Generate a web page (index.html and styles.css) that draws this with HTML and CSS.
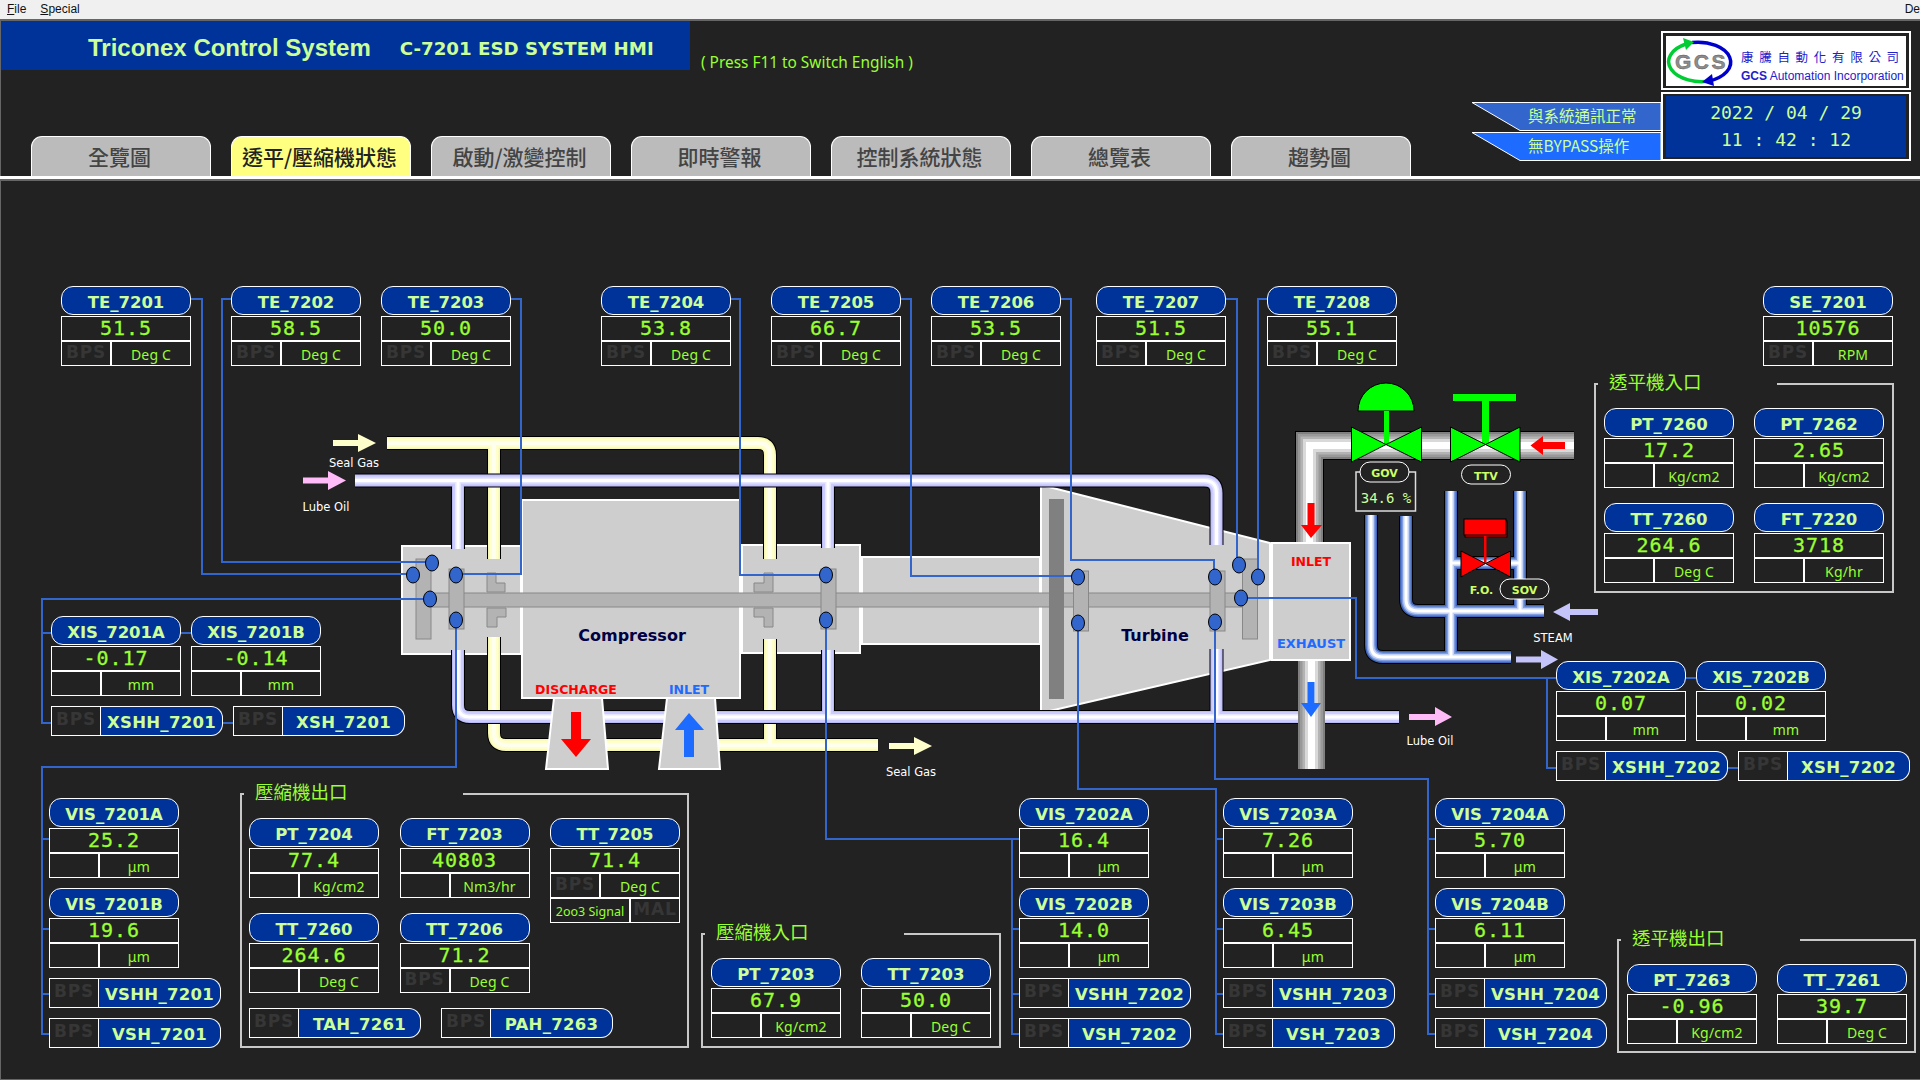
FILE: index.html
```html
<!DOCTYPE html>
<html lang="zh-Hant">

<head>
    <meta charset="UTF-8">
    <title>C-7201 ESD SYSTEM HMI</title>
    <link rel="stylesheet" href="styles.css">
</head>

<body>
    <div class="menubar">
        <span><u>F</u>ile</span>
        <span><u>S</u>pecial</span>
        <span class="menu-end">De</span>
    </div>

    <div class="screen">
        <header class="head">
            <div class="head-left">
                <div class="title-row">
                    <div class="title-band">
                        <span class="title-main">Triconex Control System</span>
                        <span class="title-sub">C-7201 ESD SYSTEM HMI</span>
                    </div>
                    <span class="press-hint">( Press F11 to Switch English )</span>
                </div>
                <nav class="tabs">
                    <a class="tab">全覽圖</a>
                    <a class="tab tab-active">透平/壓縮機狀態</a>
                    <a class="tab">啟動/激變控制</a>
                    <a class="tab">即時警報</a>
                    <a class="tab">控制系統狀態</a>
                    <a class="tab">總覽表</a>
                    <a class="tab">趨勢圖</a>
                </nav>
            </div>

            <div class="head-right">
                <div class="chips">
                    <svg class="chip" width="190" height="29" viewBox="0 0 190 29">
                        <polygon class="chip-a" points="1,.5 190,.5 190,28.5 49,28.5" />
                        <text x="57" y="20">與系統通訊正常</text>
                    </svg>
                    <svg class="chip" width="190" height="29" viewBox="0 0 190 29">
                        <polygon class="chip-b" points="1,.5 190,.5 190,28.5 49,28.5" />
                        <text x="57" y="20">無BYPASS操作</text>
                    </svg>
                </div>
                <div class="id-col">
                    <div class="logo-box">
                        <svg class="logo" width="240" height="50" viewBox="0 0 240 50">
                            <path class="logo-green" d="M20,8 A33,20 0 0 0 46,44.6" />
                            <path class="logo-blue" d="M26,6.5 A33,20 0 0 1 42,45.2" />
                            <polygon class="logo-green-head" points="17,2 28,6 20,14" />
                            <polygon class="logo-blue-head" points="46,38 48,50 36,46" />
                            <text class="logo-gcs" x="9" y="33">GCS</text>
                            <text class="logo-cn" x="75" y="26">康騰自動化有限公司</text>
                            <text class="logo-en" x="75" y="44"><tspan class="logo-en-b">GCS</tspan> Automation Incorporation</text>
                        </svg>
                    </div>
                    <div class="clock-box">
                        <div class="clock">
                            <span>2022 / 04 / 29</span>
                            <span>11 : 42 : 12</span>
                        </div>
                    </div>
                </div>
            </div>
        </header>
        <div class="head-rule"></div>

        <main class="plant">
            <svg class="plant-svg" width="1920" height="898" viewBox="0 181 1920 898">
                <defs>
                    <path id="oil" d="M355,480.5 H1204 Q1216.5,480.5 1216.5,493 V545 M458,480.5 V549 M828,480.5 V548 M458,650 V705 Q458,717 470,717 H1399 M828,650 V717 M1216.5,649 V717" />
                    <path id="cream" d="M387,443 H758 Q770,443 770,455 V559 M494,443 V559 M494,637 V733 Q494,745 506,745 H878 M770,639 V745" />
                    <path id="steam" d="M1371,515 V645 Q1371,657 1383,657 H1511 M1406,516 V599 Q1406,611 1418,611 H1544 M1451,491 V657 M1520,491 V611 M1451,563 H1520" />
                    <path id="hp" d="M1574,445.5 H1309.5 V545" />
                    <path id="ex" d="M1311.5,655 V769" />
                </defs>

                <!-- machine bodies -->
                <rect class="body" x="402" y="546" width="119" height="108" />
                <rect class="body" x="742" y="545" width="118" height="108" />
                <rect class="body" x="862" y="557" width="178" height="87" />
                <rect class="body" x="522" y="500" width="218" height="198" />
                <polygon class="body" points="1041,485 1270,543 1270,660 1041,713" />

                <!-- seal gas and lube oil headers -->
                <g class="pipe">
                    <use href="#cream" class="ck" />
                    <use href="#cream" class="c1" />
                    <use href="#cream" class="c2" />
                    <use href="#cream" class="c3" />
                    <use href="#oil" class="ck" />
                    <use href="#oil" class="o1" />
                    <use href="#oil" class="o2" />
                    <use href="#oil" class="o3" />
                    <use href="#oil" class="o4" />
                </g>

                <!-- rotor and bearings -->
                <rect class="part" x="431" y="593" width="813" height="14" />
                <rect class="part" x="416" y="559" width="15" height="80" />
                <rect class="part" x="449" y="569" width="15" height="60" />
                <rect class="part" x="821" y="569" width="15" height="60" />
                <rect class="part" x="1073.500" y="571" width="15" height="60" />
                <rect class="part" x="1210" y="571" width="15" height="60" />
                <rect class="part" x="1242.500" y="559" width="15" height="80" />
                <polygon class="part" points="487,573 496,573 496,583 505,583 505,592 487,592" />
                <polygon class="part" points="487,608 506,608 506,617 497,617 497,627 487,627" />
                <polygon class="part" points="764,573 773,573 773,592 754,592 754,583 764,583" />
                <polygon class="part" points="754,608 773,608 773,627 764,627 764,617 754,617" />
                <rect class="disk" x="1049" y="499" width="15" height="200" />

                <!-- compressor nozzles -->
                <polygon class="body" points="554,698 602,698 608,769 546,769" />
                <polygon class="body" points="667,698 715,698 720,769 659,769" />
                <polygon class="red" points="571,712 581,712 581,739 591,739 576,757 561,739 571,739" />
                <polygon class="blue" points="684,757 694,757 694,730 704,730 689,713 675,730 684,730" />

                <!-- steam pipes -->
                <g class="pipe-hp">
                    <use href="#hp" class="gk" />
                    <use href="#hp" class="g1" />
                    <use href="#hp" class="g2" />
                    <use href="#hp" class="g3" />
                    <use href="#hp" class="g4" />
                    <use href="#hp" class="g5" />
                    <use href="#ex" class="g1" />
                    <use href="#ex" class="g2" />
                    <use href="#ex" class="g3" />
                    <use href="#ex" class="g4" />
                    <use href="#ex" class="g5" />
                </g>
                <rect class="body" x="1272" y="543" width="78" height="117" />
                <g class="pipe">
                    <use href="#steam" class="ck" />
                    <use href="#steam" class="s1" />
                    <use href="#steam" class="s2" />
                    <use href="#steam" class="s3" />
                    <use href="#steam" class="s4" />
                </g>
                <polygon class="red" points="1307.500,503 1314.500,503 1314.500,525 1322,525 1311,538 1301,525 1307.500,525" />
                <polygon class="blue" points="1307.500,682 1314.500,682 1314.500,703 1321,703 1311,717 1301,703 1307.500,703" />
                <polygon class="red" points="1565,442 1543,442 1543,436 1530.500,445.500 1543,455 1543,449 1565,449" />

                <!-- valves -->
                <path class="valve" d="M1358,411 A28,28 0 0 1 1414,411 Z" />
                <rect class="valve-stem" x="1384" y="411" width="5" height="34" />
                <polygon class="valve" points="1351.500,427 1386,444.500 1351.500,462" />
                <polygon class="valve" points="1421.500,427 1386,444.500 1421.500,462" />
                <rect class="valve-stem" x="1453" y="394" width="63" height="7" />
                <rect class="valve-stem" x="1482" y="400" width="7" height="45" />
                <polygon class="valve" points="1450.500,427 1485.500,444.500 1450.500,462" />
                <polygon class="valve" points="1520,427 1485.500,444.500 1520,462" />
                <rect class="valve-red" x="1465" y="521" width="42" height="16" />
                <rect class="valve-red" x="1464" y="519" width="42" height="16" />
                <rect class="valve-red-stem" x="1484" y="536" width="2.500" height="27" />
                <polygon class="valve-red" points="1461,551 1485.500,563.500 1461,577" />
                <polygon class="valve-red" points="1510.500,551 1485.500,563.500 1510.500,577" />

                <rect class="pos-box" x="1356" y="472" width="59.500" height="39" />
                <text class="pos-val" x="1386" y="503">34.6 %</text>
                <rect class="pill" x="1360" y="462" width="49" height="20" rx="10" />
                <text class="pill-txt" x="1384.500" y="476.500">GOV</text>
                <rect class="pill" x="1461.500" y="465" width="49" height="19" rx="9.500" />
                <text class="pill-txt" x="1486" y="480">TTV</text>
                <rect class="pill" x="1500" y="579" width="49" height="20" rx="10" />
                <text class="pill-txt" x="1524.500" y="594">SOV</text>
                <text class="pill-txt" x="1481.500" y="594">F.O.</text>

                <!-- flow arrows -->
                <polygon class="cream-arrow" points="333,440 358,440 358,434 376,443 358,452 358,446 333,446" />
                <polygon class="cream-arrow" points="889,743 914,743 914,737 932,746 914,755 914,749 889,749" />
                <polygon class="pink-arrow" points="303,477.500 328,477.500 328,471 346,480.500 328,490 328,483.500 303,483.500" />
                <polygon class="pink-arrow" points="1409,714 1435,714 1435,707 1452,717 1435,726 1435,720 1409,720" />
                <polygon class="lilac-arrow" points="1516,656.500 1541,656.500 1541,650 1558,659.500 1541,669 1541,662.500 1516,662.500" />
                <polygon class="lilac-arrow" points="1598,609 1570,609 1570,603 1553,612 1570,621 1570,615 1598,615" />

                <text class="lbl" x="354" y="467">Seal Gas</text>
                <text class="lbl" x="326" y="511">Lube Oil</text>
                <text class="lbl" x="911" y="776">Seal Gas</text>
                <text class="lbl" x="1430" y="745">Lube Oil</text>
                <text class="lbl" x="1553" y="642">STEAM</text>

                <text class="mach" x="632" y="641">Compressor</text>
                <text class="mach" x="1155" y="641">Turbine</text>
                <text class="noz noz-red" x="576" y="694">DISCHARGE</text>
                <text class="noz noz-blue" x="689" y="694">INLET</text>
                <text class="noz noz-red" x="1311" y="566">INLET</text>
                <text class="noz noz-blue noz-wide" x="1311" y="648">EXHAUST</text>

                <!-- signal lines -->
                <path class="sig" d="M191,299 H202 V574 H413" />
                <path class="sig" d="M231,299 H222 V562 H432" />
                <path class="sig" d="M511,299 H521 V574 H456" />
                <path class="sig" d="M731,299 H740 V575 H826" />
                <path class="sig" d="M901,299 H911 V576 H1078" />
                <path class="sig" d="M1061,299 H1071 V560 H1214 V577" />
                <path class="sig" d="M1226,299 H1237 V565" />
                <path class="sig" d="M1267,299 H1258 V577" />
                <path class="sig" d="M430,599 H42 V723 H51 M42,633 H51 M180,633 H191 M222,723 H233" />
                <path class="sig" d="M456,620 V767 H42 V1034 H50 M42,839 H50 M42,929 H50 M42,994 H50" />
                <path class="sig" d="M826,620 V839 H1020 M1012,839 V1034 H1020 M1012,929 H1020 M1012,994 H1020" />
                <path class="sig" d="M1078,623 V789 H1216 V1034 H1224 M1216,839 H1224 M1216,929 H1224 M1216,994 H1224" />
                <path class="sig" d="M1215,622 V779 H1428 V1034 H1435 M1428,839 H1435 M1428,929 H1435 M1428,994 H1435" />
                <path class="sig" d="M1241,598 H1356 V678 H1556 M1547,678 V768 H1556 M1685,678 H1696 M1727,768 H1738" />

                <ellipse class="probe" cx="413" cy="575" rx="6.500" ry="8" />
                <ellipse class="probe" cx="432" cy="563" rx="6.500" ry="8" />
                <ellipse class="probe" cx="430" cy="599" rx="6.500" ry="8" />
                <ellipse class="probe" cx="456" cy="575" rx="6.500" ry="8" />
                <ellipse class="probe" cx="456" cy="620" rx="6.500" ry="8" />
                <ellipse class="probe" cx="826" cy="575" rx="6.500" ry="8" />
                <ellipse class="probe" cx="826" cy="620" rx="6.500" ry="8" />
                <ellipse class="probe" cx="1078" cy="577" rx="6.500" ry="8" />
                <ellipse class="probe" cx="1078" cy="623" rx="6.500" ry="8" />
                <ellipse class="probe" cx="1215" cy="577" rx="6.500" ry="8" />
                <ellipse class="probe" cx="1215" cy="622" rx="6.500" ry="8" />
                <ellipse class="probe" cx="1239" cy="565" rx="6.500" ry="8" />
                <ellipse class="probe" cx="1258" cy="577" rx="6.500" ry="8" />
                <ellipse class="probe" cx="1241" cy="598" rx="6.500" ry="8" />
            </svg>

            <!-- bearing temperatures -->
            <div class="tag at-te1"><div class="tag-name">TE_7201</div><div class="tag-val">51.5</div><div class="tag-foot"><span class="bps">BPS</span><span class="unit">Deg C</span></div></div>
            <div class="tag at-te2"><div class="tag-name">TE_7202</div><div class="tag-val">58.5</div><div class="tag-foot"><span class="bps">BPS</span><span class="unit">Deg C</span></div></div>
            <div class="tag at-te3"><div class="tag-name">TE_7203</div><div class="tag-val">50.0</div><div class="tag-foot"><span class="bps">BPS</span><span class="unit">Deg C</span></div></div>
            <div class="tag at-te4"><div class="tag-name">TE_7204</div><div class="tag-val">53.8</div><div class="tag-foot"><span class="bps">BPS</span><span class="unit">Deg C</span></div></div>
            <div class="tag at-te5"><div class="tag-name">TE_7205</div><div class="tag-val">66.7</div><div class="tag-foot"><span class="bps">BPS</span><span class="unit">Deg C</span></div></div>
            <div class="tag at-te6"><div class="tag-name">TE_7206</div><div class="tag-val">53.5</div><div class="tag-foot"><span class="bps">BPS</span><span class="unit">Deg C</span></div></div>
            <div class="tag at-te7"><div class="tag-name">TE_7207</div><div class="tag-val">51.5</div><div class="tag-foot"><span class="bps">BPS</span><span class="unit">Deg C</span></div></div>
            <div class="tag at-te8"><div class="tag-name">TE_7208</div><div class="tag-val">55.1</div><div class="tag-foot"><span class="bps">BPS</span><span class="unit">Deg C</span></div></div>
            <div class="tag at-se"><div class="tag-name">SE_7201</div><div class="tag-val">10576</div><div class="tag-foot"><span class="bps">BPS</span><span class="unit">RPM</span></div></div>

            <!-- axial displacement -->
            <div class="cluster at-xis1">
                <div class="cluster-row">
                    <div class="tag"><div class="tag-name">XIS_7201A</div><div class="tag-val">-0.17</div><div class="tag-foot"><span class="bps"></span><span class="unit">mm</span></div></div>
                    <div class="tag"><div class="tag-name">XIS_7201B</div><div class="tag-val">-0.14</div><div class="tag-foot"><span class="bps"></span><span class="unit">mm</span></div></div>
                </div>
                <div class="cluster-row">
                    <div class="alarm"><span class="bps">BPS</span><span class="alarm-name">XSHH_7201</span></div>
                    <div class="alarm"><span class="bps">BPS</span><span class="alarm-name">XSH_7201</span></div>
                </div>
            </div>
            <div class="cluster at-xis2">
                <div class="cluster-row">
                    <div class="tag"><div class="tag-name">XIS_7202A</div><div class="tag-val">0.07</div><div class="tag-foot"><span class="bps"></span><span class="unit">mm</span></div></div>
                    <div class="tag"><div class="tag-name">XIS_7202B</div><div class="tag-val">0.02</div><div class="tag-foot"><span class="bps"></span><span class="unit">mm</span></div></div>
                </div>
                <div class="cluster-row">
                    <div class="alarm"><span class="bps">BPS</span><span class="alarm-name">XSHH_7202</span></div>
                    <div class="alarm"><span class="bps">BPS</span><span class="alarm-name">XSH_7202</span></div>
                </div>
            </div>

            <!-- vibration -->
            <div class="cluster at-vis1">
                <div class="tag"><div class="tag-name">VIS_7201A</div><div class="tag-val">25.2</div><div class="tag-foot"><span class="bps"></span><span class="unit">μm</span></div></div>
                <div class="tag"><div class="tag-name">VIS_7201B</div><div class="tag-val">19.6</div><div class="tag-foot"><span class="bps"></span><span class="unit">μm</span></div></div>
                <div class="alarm"><span class="bps">BPS</span><span class="alarm-name">VSHH_7201</span></div>
                <div class="alarm"><span class="bps">BPS</span><span class="alarm-name">VSH_7201</span></div>
            </div>
            <div class="cluster at-vis2">
                <div class="tag"><div class="tag-name">VIS_7202A</div><div class="tag-val">16.4</div><div class="tag-foot"><span class="bps"></span><span class="unit">μm</span></div></div>
                <div class="tag"><div class="tag-name">VIS_7202B</div><div class="tag-val">14.0</div><div class="tag-foot"><span class="bps"></span><span class="unit">μm</span></div></div>
                <div class="alarm"><span class="bps">BPS</span><span class="alarm-name">VSHH_7202</span></div>
                <div class="alarm"><span class="bps">BPS</span><span class="alarm-name">VSH_7202</span></div>
            </div>
            <div class="cluster at-vis3">
                <div class="tag"><div class="tag-name">VIS_7203A</div><div class="tag-val">7.26</div><div class="tag-foot"><span class="bps"></span><span class="unit">μm</span></div></div>
                <div class="tag"><div class="tag-name">VIS_7203B</div><div class="tag-val">6.45</div><div class="tag-foot"><span class="bps"></span><span class="unit">μm</span></div></div>
                <div class="alarm"><span class="bps">BPS</span><span class="alarm-name">VSHH_7203</span></div>
                <div class="alarm"><span class="bps">BPS</span><span class="alarm-name">VSH_7203</span></div>
            </div>
            <div class="cluster at-vis4">
                <div class="tag"><div class="tag-name">VIS_7204A</div><div class="tag-val">5.70</div><div class="tag-foot"><span class="bps"></span><span class="unit">μm</span></div></div>
                <div class="tag"><div class="tag-name">VIS_7204B</div><div class="tag-val">6.11</div><div class="tag-foot"><span class="bps"></span><span class="unit">μm</span></div></div>
                <div class="alarm"><span class="bps">BPS</span><span class="alarm-name">VSHH_7204</span></div>
                <div class="alarm"><span class="bps">BPS</span><span class="alarm-name">VSH_7204</span></div>
            </div>

            <!-- process panels -->
            <section class="panel at-comp-out">
                <h2 class="panel-title">壓縮機出口</h2>
                <div class="panel-grid grid-3">
                    <div class="tag"><div class="tag-name">PT_7204</div><div class="tag-val">77.4</div><div class="tag-foot"><span class="bps"></span><span class="unit">Kg/cm2</span></div></div>
                    <div class="tag"><div class="tag-name">FT_7203</div><div class="tag-val">40803</div><div class="tag-foot"><span class="bps"></span><span class="unit">Nm3/hr</span></div></div>
                    <div class="tag tag-tall"><div class="tag-name">TT_7205</div><div class="tag-val">71.4</div><div class="tag-foot"><span class="bps">BPS</span><span class="unit">Deg C</span></div><div class="tag-foot foot-rev"><span class="unit unit-small">2oo3 Signal</span><span class="bps">MAL</span></div></div>
                    <div class="tag"><div class="tag-name">TT_7260</div><div class="tag-val">264.6</div><div class="tag-foot"><span class="bps"></span><span class="unit">Deg C</span></div></div>
                    <div class="tag"><div class="tag-name">TT_7206</div><div class="tag-val">71.2</div><div class="tag-foot"><span class="bps">BPS</span><span class="unit">Deg C</span></div></div>
                    <div class="alarm-row">
                        <div class="alarm"><span class="bps">BPS</span><span class="alarm-name">TAH_7261</span></div>
                        <div class="alarm"><span class="bps">BPS</span><span class="alarm-name">PAH_7263</span></div>
                    </div>
                </div>
            </section>

            <section class="panel at-comp-in">
                <h2 class="panel-title">壓縮機入口</h2>
                <div class="panel-grid grid-2">
                    <div class="tag"><div class="tag-name">PT_7203</div><div class="tag-val">67.9</div><div class="tag-foot"><span class="bps"></span><span class="unit">Kg/cm2</span></div></div>
                    <div class="tag"><div class="tag-name">TT_7203</div><div class="tag-val">50.0</div><div class="tag-foot"><span class="bps"></span><span class="unit">Deg C</span></div></div>
                </div>
            </section>

            <section class="panel at-turb-in">
                <h2 class="panel-title">透平機入口</h2>
                <div class="panel-grid grid-2">
                    <div class="tag"><div class="tag-name">PT_7260</div><div class="tag-val">17.2</div><div class="tag-foot"><span class="bps"></span><span class="unit">Kg/cm2</span></div></div>
                    <div class="tag"><div class="tag-name">PT_7262</div><div class="tag-val">2.65</div><div class="tag-foot"><span class="bps"></span><span class="unit">Kg/cm2</span></div></div>
                    <div class="tag"><div class="tag-name">TT_7260</div><div class="tag-val">264.6</div><div class="tag-foot"><span class="bps"></span><span class="unit">Deg C</span></div></div>
                    <div class="tag"><div class="tag-name">FT_7220</div><div class="tag-val">3718</div><div class="tag-foot"><span class="bps"></span><span class="unit">Kg/hr</span></div></div>
                </div>
            </section>

            <section class="panel at-turb-out">
                <h2 class="panel-title">透平機出口</h2>
                <div class="panel-grid grid-2">
                    <div class="tag"><div class="tag-name">PT_7263</div><div class="tag-val">-0.96</div><div class="tag-foot"><span class="bps"></span><span class="unit">Kg/cm2</span></div></div>
                    <div class="tag"><div class="tag-name">TT_7261</div><div class="tag-val">39.7</div><div class="tag-foot"><span class="bps"></span><span class="unit">Deg C</span></div></div>
                </div>
            </section>
        </main>
    </div>
</body>

</html>
```

FILE: styles.css
```css
* {
    box-sizing: border-box;
}

html,
body {
    margin: 0;
    width: 1920px;
    height: 1080px;
    overflow: hidden;
    background-color: #222222;
    font-family: "DejaVu Sans", "Noto Sans CJK TC", sans-serif;
}

.menubar {
    display: flex;
    gap: 14px;
    height: 19px;
    padding-left: 7px;
    background-color: #f0f0f0;
    color: #111;
    font-family: "Liberation Sans", sans-serif;
    font-size: 12px;
    line-height: 18px;
}

.menu-end {
    margin-left: auto;
}

.screen {
    height: 1061px;
    border-bottom: 1px solid #666;
    box-shadow: inset 1px 0 #666;
}

/* header */
.head {
    display: flex;
    justify-content: space-between;
    height: 160px;
    border-top: 2px solid #666;
    border-bottom: 3px solid #fff;
}

.head-rule {
    height: 2px;
    background-color: #666;
}

.title-row {
    display: flex;
    align-items: flex-end;
}

.title-band {
    display: flex;
    align-items: center;
    gap: 29px;
    width: 689px;
    height: 49px;
    margin-left: 1px;
    padding: 5px 0 0 87px;
    background-color: #003399;
    color: #ccff99;
    font-weight: bold;
}

.title-main {
    font-family: "Liberation Sans", sans-serif;
    font-size: 24px;
}

.title-sub {
    font-size: 18.200px;
}

.press-hint {
    margin: 0 0 -3px 11px;
    color: #99ff33;
    font-family: "Noto Sans", sans-serif;
    font-size: 15.400px;
}

.tabs {
    display: flex;
    gap: 20px;
    margin: 66px 0 0 31px;
}

.tab {
    width: 180px;
    height: 40px;
    padding-right: 3px;
    border: 1px solid #fff;
    border-bottom: none;
    border-radius: 11px 11px 0 0;
    background-color: #bbbbbb;
    color: #444;
    font-family: "Noto Sans CJK TC", sans-serif;
    font-size: 21px;
    font-weight: 500;
    line-height: 38px;
    text-align: center;
}

.tab-active {
    background-color: #ffff80;
    color: #222;
}

.head-right {
    display: flex;
    align-items: flex-end;
    padding: 10px 9px 15px 0;
}

.chips {
    display: flex;
    flex-direction: column;
    gap: 1px;
}

.chip {
    display: block;
}

.chip polygon {
    stroke: #fff;
    stroke-width: 1;
}

.chip-a {
    fill: #3366cc;
}

.chip-b {
    fill: #1e6bff;
}

.chip text {
    fill: #ccff99;
    font-family: "Noto Sans CJK TC", sans-serif;
    font-size: 15.500px;
}

.id-col {
    display: flex;
    flex-direction: column;
    gap: 2px;
    width: 250px;
}

.logo-box {
    height: 59px;
    padding: 3px;
    border: 2px solid #fff;
}

.logo {
    display: block;
    background-color: #fff;
}

.logo-green,
.logo-blue {
    fill: none;
    stroke-width: 3.500;
}

.logo-green {
    stroke: #00cc33;
}

.logo-blue {
    stroke: #0000cc;
}

.logo-green-head {
    fill: #00cc33;
}

.logo-blue-head {
    fill: #0000cc;
}

.logo-gcs {
    fill: #8c8c8c;
    stroke: #555;
    stroke-width: .4;
    font-family: "Liberation Sans", sans-serif;
    font-size: 21px;
    font-weight: bold;
    letter-spacing: 2.500px;
}

.logo-cn {
    fill: #2222cc;
    font-family: "Noto Sans CJK TC", sans-serif;
    font-size: 12.500px;
    letter-spacing: 5.700px;
}

.logo-en {
    fill: #2222cc;
    font-family: "Liberation Sans", sans-serif;
    font-size: 12px;
}

.logo-en-b {
    font-weight: bold;
}

.clock-box {
    height: 69px;
    padding: 2px 3px;
    border: 2px solid #fff;
}

.clock {
    display: flex;
    flex-direction: column;
    align-items: center;
    gap: 5px;
    height: 100%;
    padding-top: 6px;
    background-color: #003399;
    color: #ccff99;
    font-family: "DejaVu Sans Mono", monospace;
    font-size: 18px;
    line-height: 22px;
}

/* plant canvas: svg carries the drawing, tags are nodes on top of it */
.plant {
    position: relative;
    height: 898px;
}

.plant-svg {
    position: absolute;
    left: 0;
    top: 0;
}

.body {
    fill: #cecece;
    stroke: #fff;
    stroke-width: 2;
}

.part {
    fill: #b3b3b3;
    stroke: #888;
    stroke-width: 1;
}

.disk {
    fill: #808080;
}

.pipe use,
.pipe-hp use {
    fill: none;
}

.ck { stroke: #000; stroke-width: 14; }
.c1 { stroke: #f6f6b4; stroke-width: 12; }
.c2 { stroke: #ffffcc; stroke-width: 9; }
.c3 { stroke: #ffffee; stroke-width: 4; }
.o1 { stroke: #b9b9f6; stroke-width: 12; }
.o2 { stroke: #ccccff; stroke-width: 10; }
.o3 { stroke: #e6e6ff; stroke-width: 6; }
.o4 { stroke: #fff; stroke-width: 3; }
.s1 { stroke: #3f66b8; stroke-width: 12; }
.s2 { stroke: #7f9de0; stroke-width: 9; }
.s3 { stroke: #c2d2f7; stroke-width: 6; }
.s4 { stroke: #fff; stroke-width: 3; }
.gk { stroke: #000; stroke-width: 29; }
.g1 { stroke: #808080; stroke-width: 27; }
.g2 { stroke: #999; stroke-width: 23; }
.g3 { stroke: #b3b3b3; stroke-width: 18; }
.g4 { stroke: #d9d9d9; stroke-width: 13; }
.g5 { stroke: #fff; stroke-width: 7; }

.red {
    fill: #ff0000;
}

.blue {
    fill: #1e6bff;
}

.valve,
.valve-stem {
    fill: #00ff00;
}

.valve {
    stroke: #000;
    stroke-width: 1;
}

.valve-red,
.valve-red-stem {
    fill: #ff0000;
}

.valve-red {
    stroke: #000;
    stroke-width: 1;
}

.pos-box {
    fill: #222;
    stroke: #ddd;
    stroke-width: 1.500;
}

.pos-val {
    fill: #ccff99;
    font-family: "DejaVu Sans Mono", monospace;
    font-size: 14px;
    text-anchor: middle;
}

.pill {
    fill: #222;
    stroke: #fff;
    stroke-width: 1;
}

.pill-txt {
    fill: #ccff66;
    font-size: 11px;
    font-weight: bold;
    text-anchor: middle;
}

.cream-arrow {
    fill: #ffffcc;
}

.pink-arrow {
    fill: #ffbbf8;
}

.lilac-arrow {
    fill: #c4c4fa;
}

.lbl {
    fill: #fff;
    font-size: 11.500px;
    text-anchor: middle;
}

.mach {
    fill: #000044;
    font-size: 16px;
    font-weight: bold;
    text-anchor: middle;
}

.noz {
    font-size: 12.500px;
    font-weight: bold;
    text-anchor: middle;
}

.noz-wide {
    font-size: 13px;
}

.noz-red {
    fill: #ff0000;
}

.noz-blue {
    fill: #1e6bff;
}

.sig {
    fill: none;
    stroke: #3366cc;
    stroke-width: 2;
}

.probe {
    fill: #3366cc;
    stroke: #000;
    stroke-width: 1;
}

/* instrument tag */
.tag {
    width: 130px;
}

.tag-name {
    height: 29px;
    margin-bottom: 1px;
    border: 1px solid #fff;
    border-radius: 12px;
    background-color: #003399;
    color: #ccff99;
    font-size: 16.500px;
    font-weight: bold;
    line-height: 32px;
    text-align: center;
}

.tag-val {
    height: 25px;
    border: 1px solid #fff;
    color: #99ff33;
    font-family: "DejaVu Sans Mono", monospace;
    font-size: 20px;
    letter-spacing: 1px;
    line-height: 22px;
    text-align: center;
    -webkit-text-stroke: .3px #99ff33;
}

.tag-foot {
    display: flex;
    height: 25px;
}

.bps {
    display: block;
    flex: 0 0 50px;
    overflow: hidden;
    border: 1px solid #fff;
    color: #363636;
    font-size: 17px;
    font-weight: bold;
    letter-spacing: .8px;
    line-height: 21px;
    text-align: center;
    white-space: nowrap;
}

.unit {
    flex: 1;
    border: 1px solid #fff;
    color: #99ff33;
    font-family: "Noto Sans", sans-serif;
    font-size: 14px;
    letter-spacing: .2px;
    line-height: 25px;
    text-align: center;
    white-space: nowrap;
}

.foot-rev .unit {
    flex: 0 0 80px;
}

.foot-rev .bps {
    flex: 1;
}

.unit-small {
    font-size: 12.500px;
    letter-spacing: 0;
}

/* alarm switch */
.alarm {
    display: flex;
    width: 172px;
    height: 30px;
}

.alarm-name {
    flex: 1;
    border: 1px solid #fff;
    border-left: none;
    border-radius: 0 12px 12px 0;
    background-color: #003399;
    color: #ccff99;
    font-size: 16.500px;
    font-weight: bold;
    letter-spacing: .3px;
    line-height: 32px;
    text-align: center;
}

.alarm .bps {
    line-height: 24px;
}

.at-te1, .at-te2, .at-te3, .at-te4, .at-te5, .at-te6, .at-te7, .at-te8, .at-se,
.at-xis1, .at-xis2, .at-vis1, .at-vis2, .at-vis3, .at-vis4,
.at-comp-out, .at-comp-in, .at-turb-in, .at-turb-out {
    position: absolute;
}

.at-te1, .at-te2, .at-te3, .at-te4, .at-te5, .at-te6, .at-te7, .at-te8, .at-se {
    top: 105px;
}

.at-te1 { left: 61px; }
.at-te2 { left: 231px; }
.at-te3 { left: 381px; }
.at-te4 { left: 601px; }
.at-te5 { left: 771px; }
.at-te6 { left: 931px; }
.at-te7 { left: 1096px; }
.at-te8 { left: 1267px; }
.at-se { left: 1763px; }

.cluster {
    display: flex;
    flex-direction: column;
    gap: 10px;
}

.cluster-row {
    display: flex;
    gap: 10px;
}

.at-xis1 { left: 51px; top: 435px; }
.at-xis2 { left: 1556px; top: 480px; }
.at-vis1 { left: 49px; top: 617px; }
.at-vis2 { left: 1019px; top: 617px; }
.at-vis3 { left: 1223px; top: 617px; }
.at-vis4 { left: 1435px; top: 617px; }

/* grouped panels */
.panel {
    padding: 23px 8px 0;
    border: 2px solid #c8c8c8;
}

.panel-title {
    position: absolute;
    left: 2px;
    top: -18px;
    height: 28px;
    margin: 0;
    padding-left: 11px;
    background-color: #222222;
    color: #99ff33;
    font-family: "Noto Sans CJK TC", sans-serif;
    font-size: 18.500px;
    font-weight: normal;
    line-height: 28px;
}

.panel-grid {
    display: grid;
    column-gap: 20px;
    row-gap: 15px;
    align-items: start;
}

.grid-2 {
    grid-template-columns: 130px 130px;
}

.grid-3 {
    grid-template-columns: 130px 130px 130px;
}

.tag-tall {
    grid-row: span 2;
}

.alarm-row {
    grid-column: 1 / -1;
    display: flex;
    gap: 20px;
}

.at-comp-out { left: 240px; top: 612px; width: 449px; height: 255px; padding-left: 7px; }
.at-comp-out .panel-grid { column-gap: 20.500px; }
.at-comp-in { left: 701px; top: 752px; width: 300px; height: 115px; }
.at-turb-in { left: 1594px; top: 202px; width: 300px; height: 210px; }
.at-turb-out { left: 1617px; top: 758px; width: 299px; height: 114px; }

.at-comp-out .panel-title { width: 219px; }
.at-comp-in .panel-title { width: 199px; }
.at-turb-in .panel-title { width: 179px; }
.at-turb-out .panel-title { width: 179px; }
```
